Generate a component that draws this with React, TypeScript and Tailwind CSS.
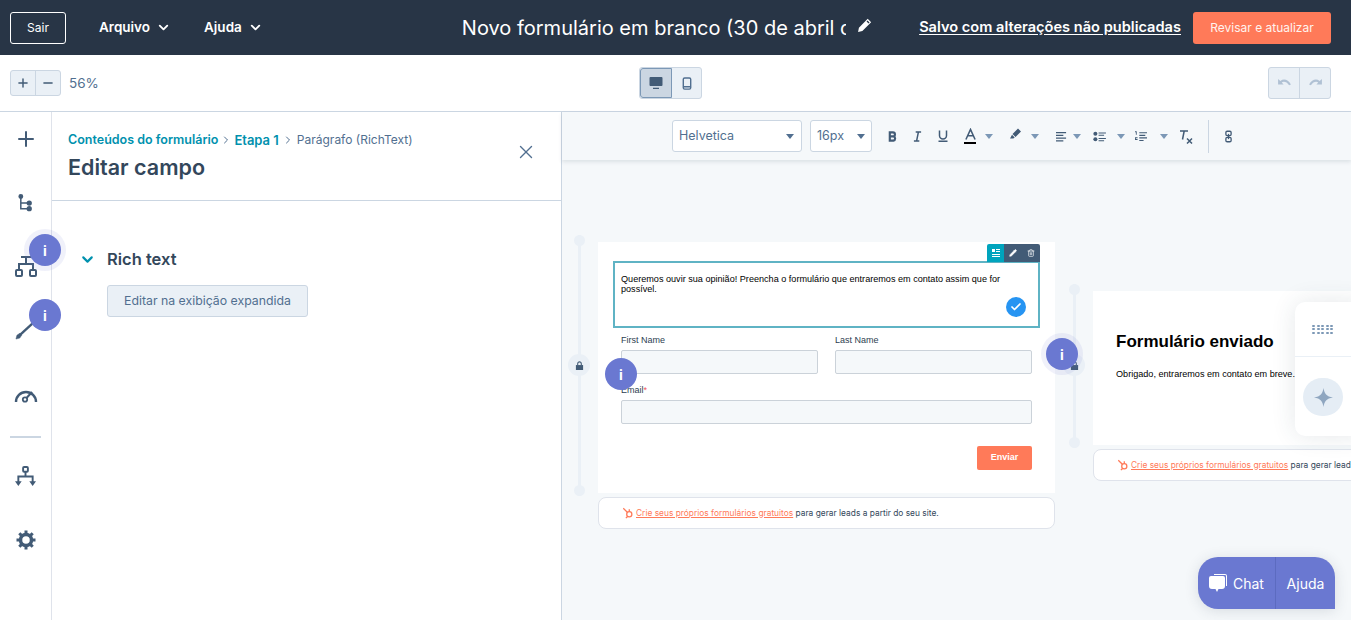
import { Check, ChevronDown, ChevronRight, Pencil, Plus, Trash2, X, Minus } from 'lucide-react';
import type { ReactNode } from 'react';

const font = "font-['Inter','Noto_Sans',sans-serif]";
const formFont = "font-['Liberation_Sans',Arial,sans-serif]";

function Caret({ className = 'border-t-[#7c98b6]' }: { className?: string }) {
  return <span className={`inline-block w-0 h-0 border-x-[4px] border-x-transparent border-t-[5px] ${className}`} />;
}

function InfoBadge({ className, halo }: { className: string; halo?: boolean }) {
  return (
    <div
      className={`absolute z-30 w-8 h-8 rounded-full bg-[#6a78d1] flex items-center justify-center text-white font-bold text-[14px] ${font} ${className} ${halo ? 'shadow-[0_0_0_5px_rgba(106,120,209,0.1)]' : ''}`}
    >
      i
    </div>
  );
}

function SideIcon({ children, className }: { children: ReactNode; className: string }) {
  return <div className={`flex justify-center text-[#425b76] ${className}`}>{children}</div>;
}

function HubspotMark() {
  return (
    <svg viewBox="0 0 14 14" className="w-[12px] h-[12px] shrink-0" fill="none" stroke="#ff7a59" strokeWidth="1.5">
      <circle cx="8.5" cy="8.5" r="3" />
      <path d="M1.5 1.5 6.5 6.5M8.5 5.5V2.5M6.5 11l-2 2" />
    </svg>
  );
}

function Field({ label, required, className }: { label: string; required?: boolean; className?: string }) {
  return (
    <div className={className}>
      <div className="text-[9px] leading-[12px] text-[#2d3e50]">
        {label}
        {required && <span className="text-[#f2545b]">*</span>}
      </div>
      <div className="h-[24px] mt-[4px] rounded-[2px] border border-[#cbd2d9] bg-[#f5f8fa]" />
    </div>
  );
}

function Footer({ className }: { className: string }) {
  return (
    <div className={`absolute bg-white border border-[#dfe3eb] rounded-[8px] flex items-center gap-[2px] pl-[23px] text-[8.4px] text-[#33475b] whitespace-nowrap overflow-hidden ${font} ${className}`}>
      <HubspotMark />
      <span>
        <span className="text-[#ff7a59] underline">Crie seus próprios formulários gratuitos</span> para gerar leads a partir do seu site.
      </span>
    </div>
  );
}

function Timeline({ className, height, lockAt }: { className: string; height: string; lockAt: string }) {
  return (
    <div className={`absolute w-[12px] flex justify-center ${className} ${height}`}>
      <div className="w-[3px] h-full bg-[#eaf0f6]" />
      <div className="absolute top-0 w-[11px] h-[11px] rounded-full bg-[#eaf0f6]" />
      <div className="absolute bottom-0 w-[11px] h-[11px] rounded-full bg-[#eaf0f6]" />
      <div className={`absolute w-[22px] h-[22px] rounded-full bg-[#eaf0f6] flex items-center justify-center ${lockAt}`}>
        <svg viewBox="0 0 10 10" className="w-[9px] h-[9px]" fill="#425b76">
          <path d="M1 4.5h8V10H1z" />
          <path d="M3 4.5V3a2 2 0 0 1 4 0v1.5" fill="none" stroke="#425b76" strokeWidth="1.2" />
        </svg>
      </div>
    </div>
  );
}

function FormatToolbar() {
  return (
    <div className="relative z-10 h-[48px] bg-[#f5f8fa] shadow-[0_2px_4px_rgba(45,62,80,0.12)] flex items-center pl-[110px] text-[#425b76] shrink-0">
      <div className="w-[130px] h-[32px] rounded-[3px] border border-[#cbd6e2] bg-white flex items-center justify-between pl-[6px] pr-[7px] pt-[1px] text-[12.5px] text-[#516f90]">
        Helvetica
        <Caret className="border-t-[#516f90]" />
      </div>
      <div className="ml-[8px] w-[62px] h-[32px] rounded-[3px] border border-[#cbd6e2] bg-white flex items-center justify-between pl-[6px] pr-[6px] pt-[1px] text-[12.5px] text-[#516f90]">
        16px
        <Caret className="border-t-[#516f90]" />
      </div>
      <svg viewBox="0 0 10 12" className="ml-[16px] w-[9px] h-[11px]" fill="none" stroke="#425b76" strokeWidth="2.4">
        <path d="M2 1.5h3.5a2.2 2.2 0 0 1 0 4.4H2zM2 5.9h4a2.4 2.4 0 0 1 0 4.7H2z" />
      </svg>
      <svg viewBox="0 0 10 12" className="ml-[16px] w-[9px] h-[11px]" fill="none" stroke="#425b76" strokeWidth="1.6">
        <path d="M3 1h6M1 11h6M6 1 4 11" />
      </svg>
      <svg viewBox="0 0 10 12" className="ml-[16px] w-[10px] h-[12px]" fill="none" stroke="#425b76" strokeWidth="1.5">
        <path d="M1.5 0.5v5a3.5 3.5 0 0 0 7 0v-5M0.5 11.2h9" />
      </svg>
      <div className="ml-[16px] w-[12px] flex flex-col items-center">
        <svg viewBox="0 0 12 12" className="w-[11px] h-[12px]" fill="none" stroke="#425b76" strokeWidth="1.7">
          <path d="M1 12 6 1l5 11M3 8h6" />
        </svg>
        <div className="w-[12px] h-[2px] bg-black mt-[2px]" />
      </div>
      <span className="ml-[9px] flex"><Caret /></span>
      <svg viewBox="0 0 12 12" className="ml-[16px] w-[13px] h-[12px] -mt-[4px]" fill="#425b76">
        <path d="M8.5 0.5 11.5 3.5 6 9 3 6zM2.5 6.800 5.200 9.500 3.800 10.500H0.500z" />
      </svg>
      <span className="ml-[9px] flex"><Caret /></span>
      <svg viewBox="0 0 12 12" className="ml-[17px] w-[11px] h-[11px]" fill="#425b76">
        <path d="M0 1h11v1.400H0zM0 4h8v1.400H0zM0 7h11v1.400H0zM0 10h8v1.400H0z" />
      </svg>
      <span className="ml-[6px] flex"><Caret /></span>
      <svg viewBox="0 0 14 12" className="ml-[12px] w-[13px] h-[11px]" fill="#425b76">
        <circle cx="2.500" cy="3" r="2.200" />
        <circle cx="2.500" cy="9" r="2.200" />
        <path d="M6 1.500h8v1.300H6zM6 4h6v1.300H6zM6 7.500h8v1.300H6zM6 10h6v1.300H6z" />
      </svg>
      <span className="ml-[11px] flex"><Caret /></span>
      <svg viewBox="0 0 14 12" className="ml-[10px] w-[12px] h-[11px]" fill="#425b76">
        <path d="M0 0h2v4H1V1H0zM0 7h3v1H1v1h2v1H0zM5 1h9v1.300H5zM5 4h7v1.300H5zM5 7h9v1.300H5zM5 10h5v1.300H5z" />
      </svg>
      <span className="ml-[13px] flex"><Caret /></span>
      <svg viewBox="0 0 14 14" className="ml-[11px] w-[14px] h-[15px]" fill="none" stroke="#425b76" strokeWidth="1.500">
        <path d="M1 1.500h8M5.200 1.500 3.500 10M8 9l5 5M13 9l-5 5" />
      </svg>
      <div className="ml-[15px] w-px h-[33px] bg-[#cbd6e2]" />
      <svg viewBox="0 0 8 14" className="ml-[16px] w-[7px] h-[13px]" fill="none" stroke="#425b76" strokeWidth="1.500">
        <rect x="1" y="1" width="6" height="5" rx="1.500" />
        <rect x="1" y="8" width="6" height="5" rx="1.500" />
        <path d="M4 4v6" />
      </svg>
    </div>
  );
}

export default function App() {
  return (
    <div className={`relative w-[1351px] h-[620px] overflow-hidden bg-white flex flex-col ${font}`}>
      <header className="h-[55px] shrink-0 bg-[#283546] flex items-center pl-[10px] pr-[20px] text-white">
        <button className="w-[56px] h-[32px] rounded-[3px] border border-white text-[12px]">Sair</button>
        <span className="ml-[33px] text-[13.5px] font-semibold flex items-center gap-[6px]">
          Arquivo <ChevronDown size={15} strokeWidth={3} />
        </span>
        <span className="ml-[33px] text-[13.5px] font-semibold flex items-center gap-[6px]">
          Ajuda <ChevronDown size={15} strokeWidth={3} />
        </span>
        <div className="ml-[199px] w-[384px] overflow-hidden whitespace-nowrap text-[20px] leading-[28px]">
          Novo formulário em branco (30 de abril de 2025)
        </div>
        <svg viewBox="0 0 14 14" className="ml-[11px] -mt-[5px] w-[15px] h-[15px]" fill="white">
          <path d="M10 0.800 13.200 4 5 12.200 1 13l0.800-4zM8.900 3.200l1.900 1.900 0.900-0.900-1.900-1.900z" fillRule="evenodd" />
        </svg>
        <span className="ml-auto text-[14.6px] font-semibold underline underline-offset-2 whitespace-nowrap">Salvo com alterações não publicadas</span>
        <button className="ml-[12px] w-[138px] h-[32px] rounded-[3px] bg-[#ff7a59] text-[12px] text-[#fff3ee]">Revisar e atualizar</button>
      </header>

      <div className="h-[57px] shrink-0 border-b border-[#cbd6e2] flex items-center justify-between pl-[10px] pr-[20px]">
        <div className="flex items-center w-[240px]">
          <div className="flex w-[51px] h-[26px] rounded-[3px] border border-[#cbd6e2] bg-[#eaf0f6] text-[#425b76]">
            <span className="flex-1 flex items-center justify-center border-r border-[#cbd6e2]"><Plus size={14} strokeWidth={2.5} /></span>
            <span className="flex-1 flex items-center justify-center"><Minus size={14} strokeWidth={2.5} /></span>
          </div>
          <span className="ml-[8px] text-[13.5px] text-[#516f90]">56%</span>
        </div>
        <div className="flex w-[63px] h-[32px] rounded-[3px] border border-[#cbd6e2] bg-[#eaf0f6] overflow-hidden">
          <span className="w-[32px] flex items-center justify-center bg-[#cbd6e2] border border-[#7c98b6] rounded-l-[3px]">
            <svg viewBox="0 0 14 14" className="w-[14px] h-[14px]" fill="#425b76">
              <path d="M1.500 1h11A1 1 0 0 1 13.500 2v7a1 1 0 0 1-1 1h-11a1 1 0 0 1-1-1V2a1 1 0 0 1 1-1zM4 11.800h6V13H4z" />
            </svg>
          </span>
          <span className="flex-1 flex items-center justify-center">
            <svg viewBox="0 0 10 14" className="w-[10px] h-[13px]" fill="none" stroke="#516f90" strokeWidth="1.500">
              <rect x="1" y="1" width="8" height="12" rx="1.500" />
              <path d="M1 10.500h8" />
            </svg>
          </span>
        </div>
        <div className="w-[240px] flex justify-end">
          <div className="flex w-[63px] h-[32px] rounded-[3px] border border-[#cbd6e2] bg-[#eaf0f6]">
            <span className="flex-1 flex items-center justify-center border-r border-[#cbd6e2]">
              <svg viewBox="0 0 16 12" className="w-[15px] h-[11px]" fill="#b0c1d4">
                <path d="M1 1v6h6L5 5c2-1.500 5.500-1 8 3l2-1C12 1.500 7 .5 3.500 3.200z" />
              </svg>
            </span>
            <span className="flex-1 flex items-center justify-center">
              <svg viewBox="0 0 16 12" className="w-[15px] h-[11px] -scale-x-100" fill="#b0c1d4">
                <path d="M1 1v6h6L5 5c2-1.500 5.500-1 8 3l2-1C12 1.500 7 .5 3.500 3.200z" />
              </svg>
            </span>
          </div>
        </div>
      </div>

      <div className="flex-1 flex min-h-0">
        <nav className="w-[52px] shrink-0 border-r border-[#dfe3eb] flex flex-col pt-[15px]">
          <SideIcon className="h-[22px]"><Plus size={24} strokeWidth={2} /></SideIcon>
          <SideIcon className="mt-[44px] h-[22px]">
            <svg viewBox="0 0 16 20" className="w-[15px] h-[20px]" fill="none" stroke="#425b76" strokeWidth="1.600">
              <path d="M3 3v13h8M3 10h8" />
              <circle cx="3" cy="3" r="1.800" fill="#425b76" />
              <circle cx="12" cy="10" r="2" fill="#425b76" />
              <circle cx="12" cy="16" r="2" fill="#425b76" />
            </svg>
          </SideIcon>
          <SideIcon className="mt-[40px] h-[24px]">
            <svg viewBox="0 0 24 22" className="w-[24px] h-[22px]" fill="none" stroke="#425b76" strokeWidth="2">
              <path d="M7 2h10M12 2v7M5 15V9h14v6" />
              <rect x="2" y="15" width="6" height="6" rx="1" />
              <rect x="16" y="15" width="6" height="6" rx="1" />
            </svg>
          </SideIcon>
          <SideIcon className="mt-[40px] h-[24px]">
            <svg viewBox="0 0 22 22" className="w-[21px] h-[21px]" fill="none" stroke="#425b76">
              <path d="M5 17 19 4" strokeWidth="2.500" />
              <path d="M1 21l1-4 3-2 2 2-2 3z" fill="#425b76" strokeWidth="0.500" />
            </svg>
          </SideIcon>
          <SideIcon className="mt-[44px] h-[20px]">
            <svg viewBox="0 0 24 16" className="w-[24px] h-[16px]" fill="none" stroke="#425b76" strokeWidth="2.400">
              <path d="M2 15a10 10 0 0 1 20 0" />
              <circle cx="11" cy="12.500" r="2.200" strokeWidth="1.800" />
              <path d="M12.500 11 18 5" strokeWidth="2" />
            </svg>
          </SideIcon>
          <div className="mt-[29px] mx-[10px] h-[2px] bg-[#cbd6e2]" />
          <SideIcon className="mt-[28px] h-[22px]">
            <svg viewBox="0 0 24 22" className="w-[23px] h-[21px]" fill="none" stroke="#425b76" strokeWidth="2">
              <rect x="9.500" y="1" width="5" height="5" rx="1" />
              <path d="M12 6v5M4.500 17v-6h15v6" />
              <path d="M1 16h7l-3.500 5zM16 16h7l-3.500 5z" fill="#425b76" stroke="none" />
            </svg>
          </SideIcon>
          <SideIcon className="mt-[42px] h-[22px]">
            <svg viewBox="0 0 20 20" className="w-[20px] h-[20px]" fill="none" stroke="#425b76">
              <circle cx="10" cy="10" r="5.500" strokeWidth="3.500" />
              <path d="M10 0.500v3M10 16.500v3M0.500 10h3M16.500 10h3M3.300 3.300l2.100 2.100M14.600 14.600l2.100 2.100M16.700 3.300l-2.100 2.100M5.400 14.600l-2.100 2.100" strokeWidth="3" />
            </svg>
          </SideIcon>
        </nav>

        <section className="w-[510px] shrink-0 border-r border-[#cbd6e2]">
          <div className="h-[89px] border-b border-[#cbd6e2] pl-[16px] pr-[24px] pt-[20px] flex justify-between">
            <div>
              <div className="flex items-center text-[12px] leading-[16px]">
                <span className="font-semibold text-[12.5px] text-[#0091ae]">Conteúdos do formulário</span>
                <ChevronRight size={12} className="mx-[2px] text-[#516f90]" />
                <span className="font-semibold text-[13px] text-[#0091ae]">Etapa 1</span>
                <ChevronRight size={12} className="mx-[3px] text-[#516f90]" />
                <span className="text-[#516f90]">Parágrafo (RichText)</span>
              </div>
              <h1 className="mt-[6px] text-[21.5px] leading-[26px] font-semibold text-[#33475b]">Editar campo</h1>
            </div>
            <X size={22} strokeWidth={1.5} className="mt-[9px] text-[#516f90]" />
          </div>
          <div className="pl-[27px] pt-[48px]">
            <div className="flex items-center h-[20px]">
              <ChevronDown size={17} strokeWidth={3} className="text-[#0091ae]" />
              <span className="ml-[11px] text-[16.5px] font-semibold text-[#33475b]">Rich text</span>
            </div>
            <button className="ml-[28px] mt-[16px] w-[201px] h-[32px] rounded-[3px] border border-[#cbd6e2] bg-[#eaf0f6] text-[12.3px] text-[#516f90]">
              Editar na exibição expandida
            </button>
          </div>
        </section>

        <main className="relative flex-1 min-w-0 bg-[#f5f8fa] flex flex-col">
          <FormatToolbar />
          <div className="relative flex-1">
            <Timeline className="left-[11px] top-[75px]" height="h-[261px]" lockAt="top-[119px]" />
            <div className={`absolute left-[36px] top-[82px] w-[457px] h-[251px] bg-white ${formFont}`}>
              <div className="relative mx-[15px] mt-[19px] h-[67px] border-2 border-[#5fb3c4] px-[6px] pt-[11px] text-[9.1px] leading-[10px] text-black">
                <div className="absolute -top-[19px] -right-[2px] flex h-[18px] rounded-t-[2px] overflow-hidden">
                  <span className="w-[17px] bg-[#00a4bd] flex items-center justify-center">
                    <svg viewBox="0 0 8 8" className="w-[8px] h-[8px]" fill="white"><path d="M0 0h3v3H0zM4 0h4v1H4zM4 2h4v1H4zM0 5h8v1H0zM0 7h8v1H0z" /></svg>
                  </span>
                  <span className="w-[18px] bg-[#425b76] flex items-center justify-center"><Pencil size={8} color="white" fill="white" /></span>
                  <span className="w-[18px] bg-[#425b76] flex items-center justify-center"><Trash2 size={8} color="white" /></span>
                </div>
                Queremos ouvir sua opinião! Preencha o formulário que entraremos em contato assim que for possível.
                <div className="absolute right-[12px] bottom-[9px] w-5 h-5 rounded-full bg-[#2694f2] flex items-center justify-center">
                  <Check size={12} strokeWidth={3.5} color="white" />
                </div>
              </div>
              <div className="mx-[23px] mt-[6px] flex gap-[17px]">
                <Field label="First Name" className="flex-1" />
                <Field label="Last Name" className="flex-1" />
              </div>
              <Field label="Email" required className="mx-[23px] mt-[10px]" />
              <div className="mx-[23px] mt-[22px] flex justify-end">
                <button className="w-[55px] h-[24px] rounded-[2px] bg-[#ff7a59] text-white text-[9px] font-bold">Enviar</button>
              </div>
            </div>
            <Footer className="left-[36px] top-[337px] w-[457px] h-[32px]" />

            <Timeline className="left-[506px] top-[124px]" height="h-[164px]" lockAt="top-[70px]" />
            <div className={`absolute left-[531px] top-[131px] w-[300px] h-[154px] bg-white pl-[23px] pt-[41px] text-black whitespace-nowrap ${formFont}`}>
              <div className="text-[17px] leading-[20px] font-bold">Formulário enviado</div>
              <div className="mt-[16px] text-[9.1px] leading-[12px]">Obrigado, entraremos em contato em breve.</div>
            </div>
            <Footer className="left-[531px] top-[289px] w-[300px] h-[32px]" />
          </div>
        </main>
      </div>

      <div className="absolute z-20 left-[1295px] top-[302px] w-[70px] h-[134px] rounded-l-[10px] bg-white shadow-[0_0_24px_rgba(45,62,80,0.12)] flex flex-col">
        <div className="h-[55px] border-b border-[#eaf0f6] flex pl-[17px] items-center">
          <div className="grid grid-cols-5 gap-[1.5px]">
            {Array.from({ length: 15 }).map((_, i) => (
              <span key={i} className="w-[3px] h-[2px] rounded-[1px] bg-[#7c98b6]" />
            ))}
          </div>
        </div>
        <div className="ml-[8px] mt-[21px] w-[40px] h-[38px] rounded-full bg-[#e5edf5] flex items-center justify-center">
          <svg viewBox="0 0 20 20" className="w-[19px] h-[19px]" fill="#8fa6c0">
            <path d="M10 0c1 6 3 9 10 10-7 1-9 4-10 10-1-6-3-9-10-10 7-1 9-4 10-10z" />
          </svg>
        </div>
      </div>

      <InfoBadge className="left-[29px] top-[234px]" halo />
      <InfoBadge className="left-[29px] top-[299px]" />
      <InfoBadge className="left-[605px] top-[358px]" />
      <InfoBadge className="left-[1046px] top-[338px]" halo />

      <div className="absolute z-30 left-[1198px] top-[557px] w-[137px] h-[52px] rounded-t-[20px] rounded-bl-[20px] bg-[#6a78d1] shadow-[0_2px_14px_rgba(45,62,80,0.15)] flex text-white text-[14px]">
        <div className="w-[78px] border-r border-[#5c6bc0] flex items-center pl-[10px] gap-[5px]">
          <svg viewBox="0 0 20 20" className="w-[20px] h-[20px]" fill="white">
            <path d="M6 1h11a2 2 0 0 1 2 2v10h-1V3a1 1 0 0 0-1-1H6z" />
            <path d="M3 3h12a2 2 0 0 1 2 2v8a3 3 0 0 1-3 3h-3.500L9 19l-1.500-3H4a3 3 0 0 1-3-3V5a2 2 0 0 1 2-2z" />
          </svg>
          Chat
        </div>
        <div className="flex-1 flex items-center justify-center">Ajuda</div>
      </div>
    </div>
  );
}
